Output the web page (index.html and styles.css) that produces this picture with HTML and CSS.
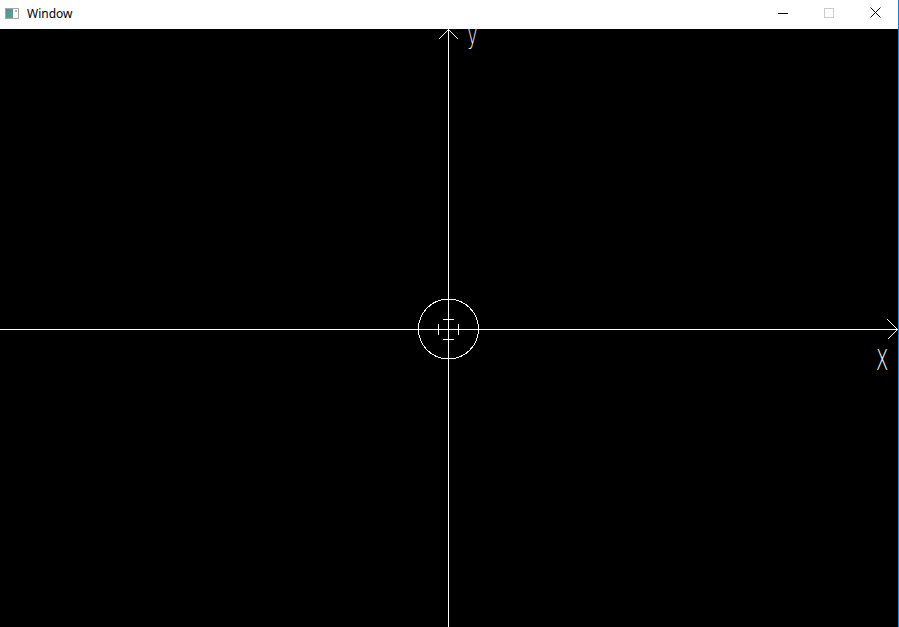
FILE: index.html
```html
<!DOCTYPE html>
<html lang="en">
<head>
  <meta charset="UTF-8" />
  <title>Window</title>
  <link rel="stylesheet" href="styles.css">
</head>
<body>

  <div class="window">
    <div class="titlebar">
      <svg class="app-icon" width="14" height="11" viewBox="0 0 14 11">
        <defs>
          <linearGradient id="iconGrad" x1="0" y1="0" x2="1" y2="1">
            <stop offset="0" stop-color="#4d8fb0" />
            <stop offset="1" stop-color="#5fa870" />
          </linearGradient>
        </defs>
        <rect x="0.5" y="0.5" width="13" height="10" fill="#ffffff" stroke="#a8a8a8" />
        <rect x="1" y="1" width="7" height="9" fill="url(#iconGrad)" />
        <rect x="10" y="2" width="2" height="2" fill="#b8b8b8" />
      </svg>
      <span class="title">Window</span>
      <div class="caption-buttons">
        <div class="caption-btn">
          <svg width="10" height="10" viewBox="0 0 10 10"><path d="M0 5.5H10" stroke="#000" /></svg>
        </div>
        <div class="caption-btn">
          <svg width="10" height="10" viewBox="0 0 10 10"><rect x="0.5" y="0.5" width="9" height="9" fill="none" stroke="#cccccc" /></svg>
        </div>
        <div class="caption-btn">
          <svg width="11" height="11" viewBox="0 0 11 11"><path d="M0.5 0.5L10.5 10.5M10.5 0.5L0.5 10.5" stroke="#000" /></svg>
        </div>
      </div>
    </div>

    <div class="canvas">
      <svg class="plot" width="898" height="598" viewBox="0 0 898 598" shape-rendering="crispEdges">
        <!-- ejes -->
        <path d="M0 300.5H898M448.5 0V598" stroke="#fff" />
        <!-- flechas -->
        <path d="M438.5 10.5L448.5 0.5L458.5 10.5" stroke="#fff" fill="none" />
        <path d="M887.5 290.5L897.5 300.5L887.5 310.5" stroke="#fff" fill="none" />
        <!-- mira central -->
        <circle cx="448.5" cy="300" r="30" stroke="#fff" fill="none" />
        <path d="M443 290.5H454M443 310.5H454M438.5 295V306M458.5 295V306" stroke="#fff" />
        <text class="axis-label label-y" x="0" y="0" transform="translate(467.5 15) scale(0.62 1)">y</text>
        <text class="axis-label" x="0" y="0" transform="translate(876 341) scale(0.62 1)">X</text>
      </svg>
    </div>
  </div>

</body>
</html>
```

FILE: styles.css
```css
body {
  margin: 0;
  background-color: black;
  font-family: "Noto Sans", Arial, sans-serif;
  overflow: hidden;
}
.window {
  width: 898px;
  border-right: 1px solid #1883d7;
  display: flex;
  flex-direction: column;
}
.titlebar {
  height: 29px;
  background-color: white;
  display: flex;
  align-items: center;
}
.app-icon {
  margin-left: 5px;
  margin-top: -2px;
}
.title {
  margin-left: 8px;
  font-size: 12px;
  color: black;
  flex: 1;
  margin-top: -2px;
}
.caption-buttons {
  display: flex;
  height: 100%;
}
.caption-btn {
  width: 46px;
  height: 100%;
  display: flex;
  align-items: center;
  justify-content: center;
  margin-top: -2px;
}
.canvas {
  height: 598px;
  background-color: black;
}
.plot {
  display: block;
}
.axis-label {
  fill: white;
  font-family: "DejaVu Sans", sans-serif;
  font-weight: 200;
  font-size: 29px;
}
.label-y {
  font-size: 27px;
}
```
